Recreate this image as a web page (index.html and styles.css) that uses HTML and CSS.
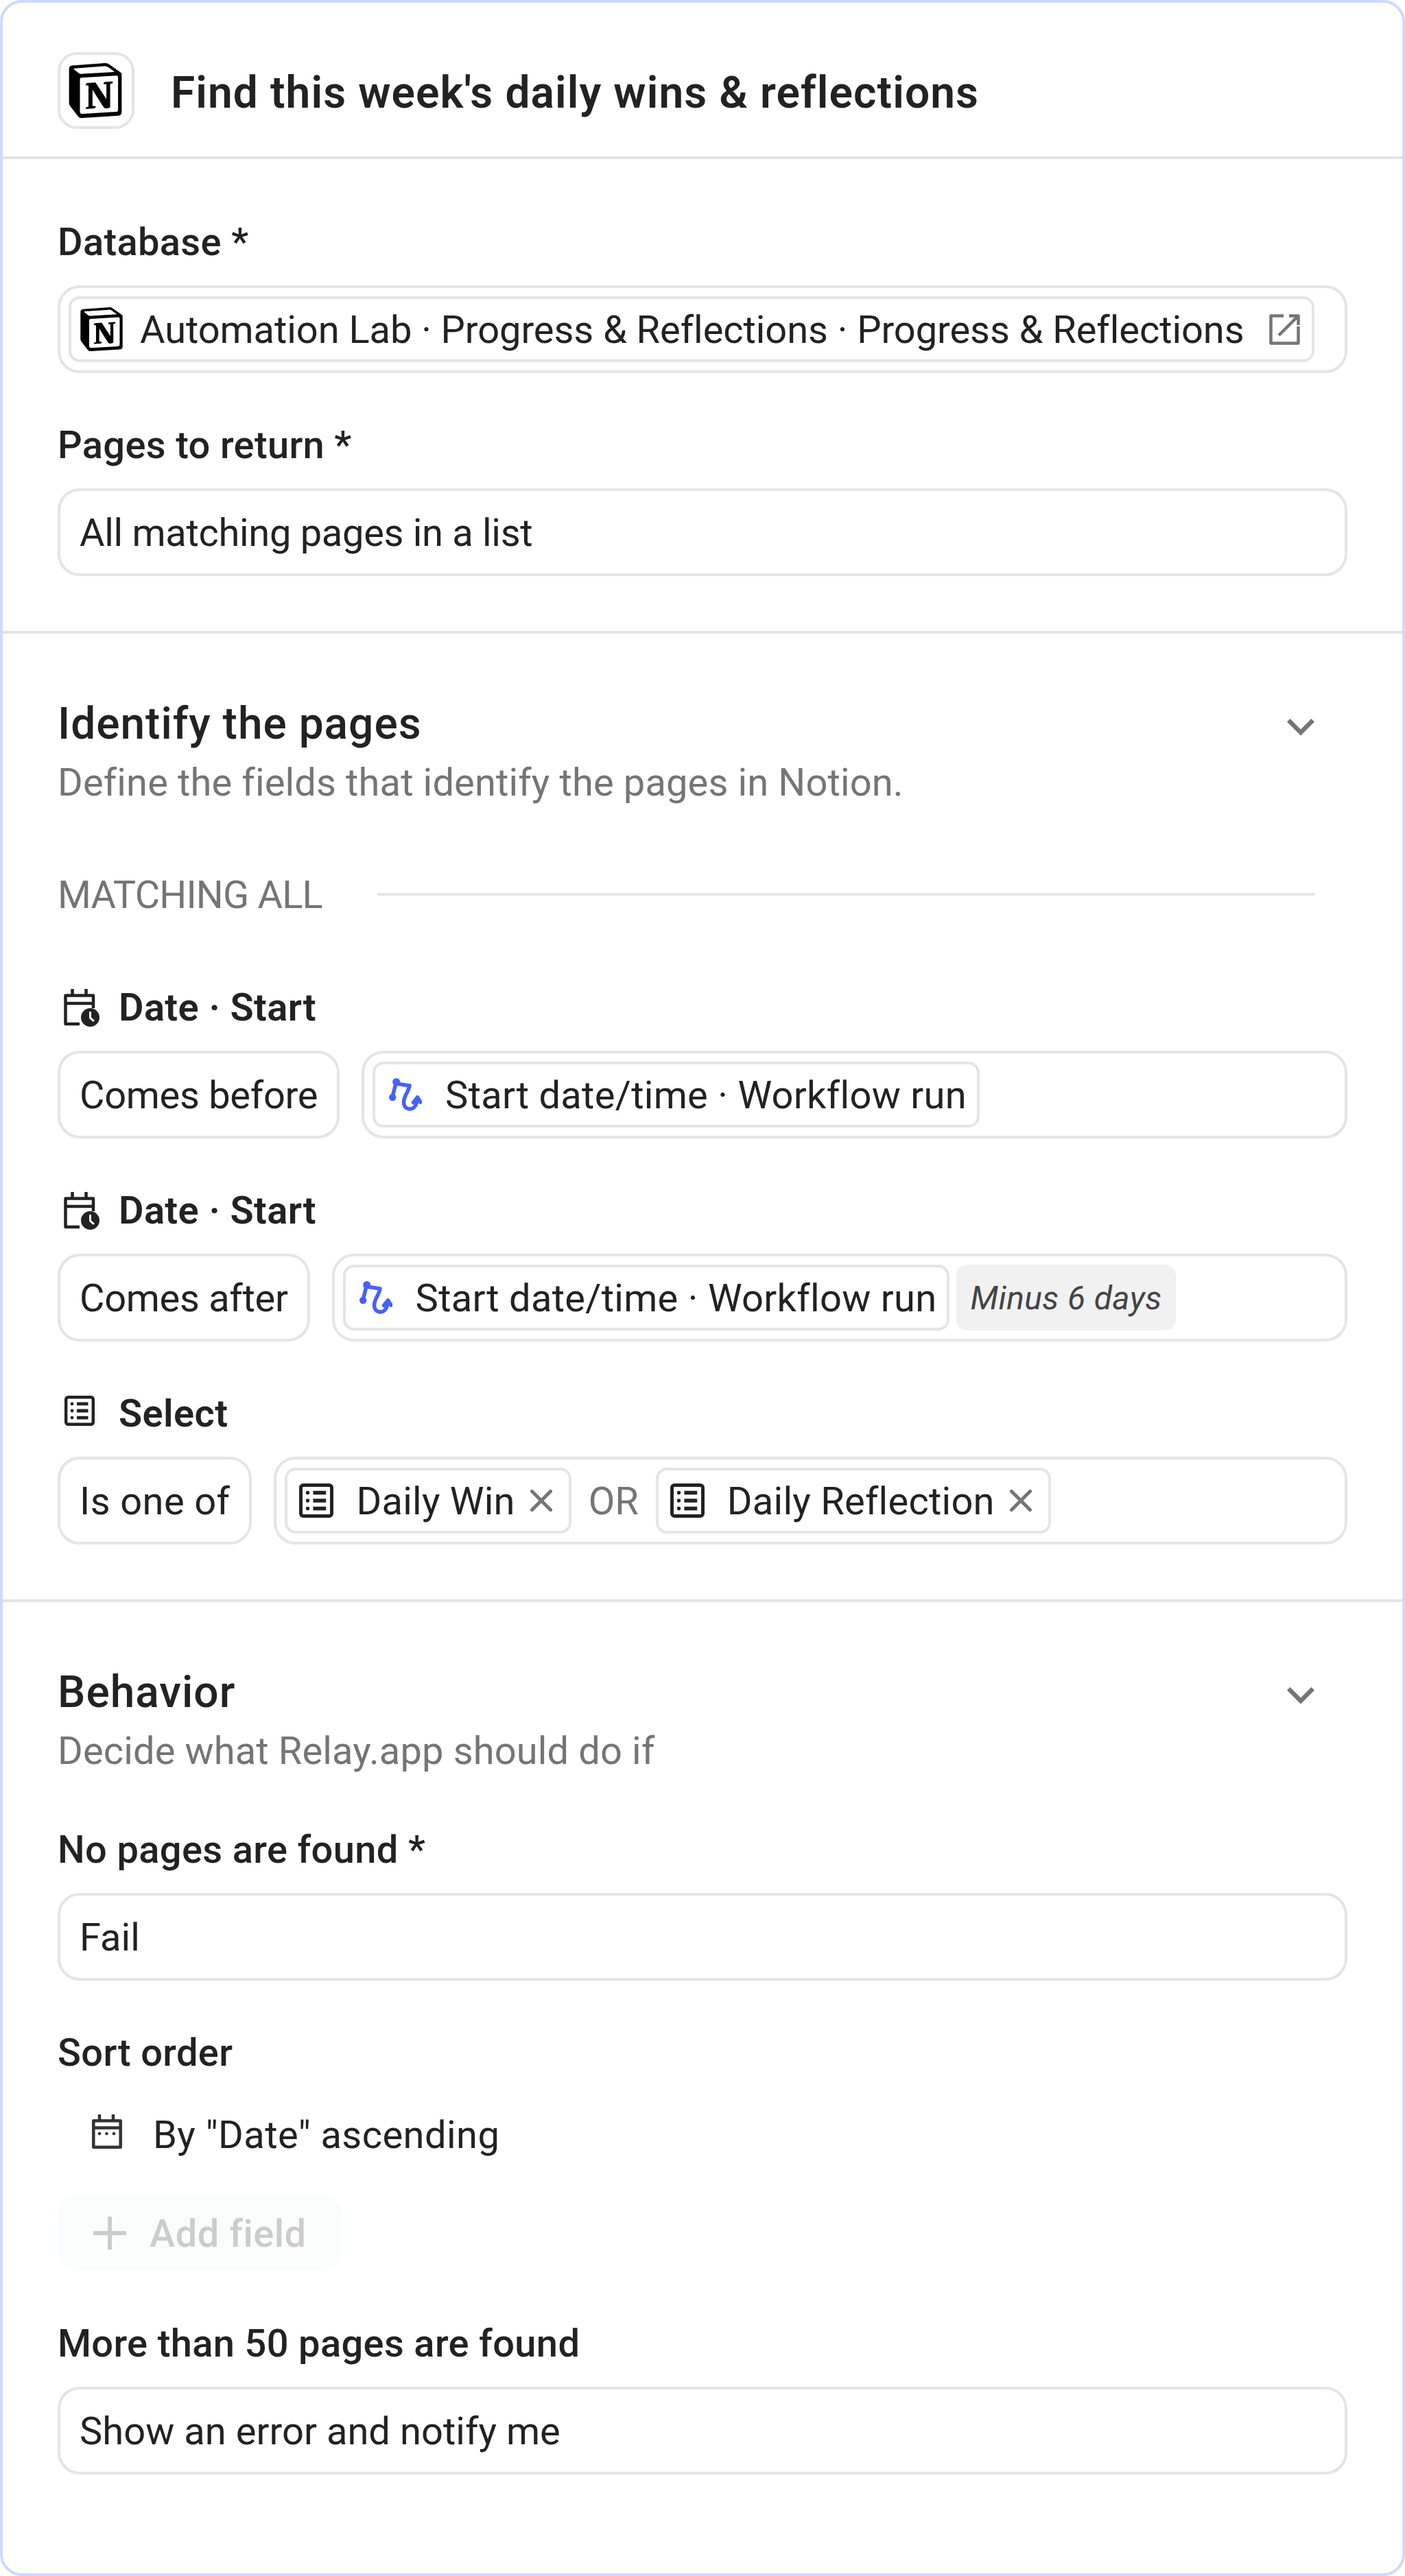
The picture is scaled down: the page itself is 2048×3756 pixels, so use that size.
FILE: index.html
```html
<!doctype html>
<html lang="en">
<head>
<meta charset="utf-8">
<title>Find this week's daily wins &amp; reflections</title>
<link rel="stylesheet" href="styles.css">
</head>
<body>
<svg class="defs" width="0" height="0" aria-hidden="true">
  <defs>
    <symbol id="notion" viewBox="0 0 24 24">
      <path fill="#fff" d="M2 2l14-1.2 6.6 4.6v17l-16.6 1-4-5z"/>
      <path fill="#000" d="M4.459 4.208c.746.606 1.026.56 2.428.466l13.215-.793c.28 0 .047-.28-.046-.326L17.86 1.968c-.42-.326-.981-.7-2.055-.607L3.01 2.295c-.466.046-.56.28-.374.466zm.793 3.08v13.904c0 .747.373 1.027 1.214.98l14.523-.84c.841-.046.935-.56.935-1.167V6.354c0-.606-.233-.933-.748-.887l-15.177.887c-.56.047-.747.327-.747.933zm14.337.745c.093.42 0 .84-.42.888l-.7.14v10.264c-.608.327-1.168.514-1.635.514-.748 0-.935-.234-1.495-.933l-4.577-7.186v6.952L12.21 19s0 .84-1.168.84l-3.222.186c-.093-.186 0-.653.327-.746l.84-.233V9.854L7.822 9.76c-.094-.42.14-1.026.793-1.073l3.456-.233 4.764 7.279v-6.44l-1.215-.14c-.093-.514.28-.887.747-.933zM1.936 1.035l13.31-.98c1.634-.14 2.055-.047 3.082.7l4.249 2.986c.7.513.934.653.934 1.213v16.378c0 1.026-.373 1.634-1.68 1.726l-15.458.934c-.98.047-1.448-.093-1.962-.747l-3.129-4.06c-.56-.747-.793-1.306-.793-1.96V2.667c0-.839.374-1.54 1.447-1.632z"/>
    </symbol>
    <symbol id="list" viewBox="0 0 24 24">
      <rect x="1.2" y="1.2" width="21.6" height="21.6" rx="1.8" fill="none" stroke="#222" stroke-width="2.4"/>
      <path fill="#222" d="M9.8 5.2h9v2.6h-9zM9.8 10.7h9v2.6h-9zM9.800 16.2h9v2.6h-9z"/>
      <circle cx="6" cy="6.5" r="1.3" fill="#222"/><circle cx="6" cy="12" r="1.3" fill="#222"/><circle cx="6" cy="17.500" r="1.3" fill="#222"/>
    </symbol>
    <symbol id="datetime" viewBox="0 0 52 55">
      <path fill="none" stroke="#222" stroke-width="4.5" stroke-linejoin="round" d="M23 51H2.500V9.500H43V28M2.500 21H43M12.500 0V9M32.500 0V9"/>
      <circle cx="38.500" cy="41.500" r="13.500" fill="#222"/>
      <path fill="none" stroke="#fff" stroke-width="3" d="M38.500 33V42L44 47"/>
    </symbol>
    <symbol id="flow" viewBox="0 0 48 48">
      <g fill="none" stroke="#4562ff" stroke-width="5.500" stroke-linecap="round" stroke-linejoin="round">
        <path d="M10.700 5L5 27.700M10.700 8L30 11C28.500 20 21.500 26 21.500 35C21.500 42 26 45 30.500 45C37 45 41 38 41.300 30"/>
        <path d="M35.500 35.500L41.500 28L46 35"/>
      </g>
      <circle cx="10.700" cy="5.500" r="5.500" fill="#4562ff"/><circle cx="5.200" cy="28" r="5.200" fill="#4562ff"/>
    </symbol>
    <symbol id="close" viewBox="0 0 32 32">
      <path fill="none" stroke="#757575" stroke-width="5" stroke-linecap="square" d="M2.500 2.500L29.500 29.500M29.500 2.500L2.500 29.500"/>
    </symbol>
    <symbol id="chevron" viewBox="0 0 40 24">
      <path fill="none" stroke="#757575" stroke-width="6.500" d="M2.300 2.300L20 20L37.700 2.300"/>
    </symbol>
  </defs>
</svg>

<main class="card">
  <header class="head">
    <span class="logo-box"><svg class="logo-lg"><use href="#notion"/></svg></span>
    <h1 class="head-title">Find this week's daily wins &amp; reflections</h1>
  </header>

  <section class="section">
    <div class="field">
      <div class="label">Database *</div>
      <div class="box box-db">
        <span class="chip chip-db">
          <svg class="logo-sm"><use href="#notion"/></svg>
          <span class="db-text">Automation Lab · Progress &amp; Reflections · Progress &amp; Reflections</span>
          <svg class="ext" viewBox="0 0 45 45"><path fill="none" stroke="#757575" stroke-width="4.500" stroke-linejoin="round" d="M21 2.500H2.500V42.500H42.500V18M29 2.500H42.500V16M14 31L42 3"/></svg>
        </span>
      </div>
    </div>
    <div class="field">
      <div class="label">Pages to return *</div>
      <div class="box box-text text-tight">All matching pages in a list</div>
    </div>
  </section>

  <section class="section">
    <div class="sec-head">
      <h2 class="sec-title">Identify the pages</h2>
      <svg class="chev"><use href="#chevron"/></svg>
    </div>
    <p class="sec-sub">Define the fields that identify the pages in Notion.</p>
    <div class="match"><span class="match-text">MATCHING ALL</span><span class="match-line"></span></div>

    <div class="conds">
      <div class="cond">
        <div class="label label-strong"><svg class="ic-date"><use href="#datetime"/></svg>Date · Start</div>
        <div class="row">
          <div class="box box-text text-tight">Comes before</div>
          <div class="box box-grow">
            <span class="chip chip-flow"><svg class="ic-flow"><use href="#flow"/></svg>Start date/time · Workflow run</span>
          </div>
        </div>
      </div>
      <div class="cond">
        <div class="label label-strong"><svg class="ic-date"><use href="#datetime"/></svg>Date · Start</div>
        <div class="row">
          <div class="box box-text text-tight">Comes after</div>
          <div class="box box-grow">
            <span class="chip chip-flow"><svg class="ic-flow"><use href="#flow"/></svg>Start date/time · Workflow run</span>
            <span class="modifier">Minus 6 days</span>
          </div>
        </div>
      </div>
      <div class="cond">
        <div class="label label-strong"><svg class="ic-list-sm"><use href="#list"/></svg>Select</div>
        <div class="row">
          <div class="box box-text text-loose">Is one of</div>
          <div class="box box-grow">
            <span class="chip chip-opt"><svg class="ic-list"><use href="#list"/></svg>Daily Win<svg class="ic-x"><use href="#close"/></svg></span>
            <span class="or">OR</span>
            <span class="chip chip-opt"><svg class="ic-list"><use href="#list"/></svg>Daily Reflection<svg class="ic-x"><use href="#close"/></svg></span>
          </div>
        </div>
      </div>
    </div>
  </section>

  <section class="section section-last">
    <div class="sec-head">
      <h2 class="sec-title">Behavior</h2>
      <svg class="chev"><use href="#chevron"/></svg>
    </div>
    <p class="sec-sub">Decide what Relay.app should do if</p>
    <div class="field field-after-sub">
      <div class="label">No pages are found *</div>
      <div class="box box-text">Fail</div>
    </div>
    <div class="field">
      <div class="label">Sort order</div>
      <div class="sort-row">
        <svg class="ic-cal" viewBox="0 0 44 50">
          <g fill="none" stroke="#333" stroke-width="4.500" stroke-linejoin="round"><path d="M2.300 9.300H41.700V47.700H2.300zM2.300 19.500H41.700M11 0V9M31 0V9"/></g>
          <circle cx="11" cy="28" r="2.300" fill="#333"/><circle cx="21.500" cy="28" r="2.300" fill="#333"/><circle cx="32" cy="28" r="2.300" fill="#333"/>
        </svg>
        <span class="sort-text">By "Date" ascending</span>
      </div>
      <div class="add-btn">
        <svg class="ic-plus" viewBox="0 0 48 48"><path fill="none" stroke="#ccc" stroke-width="6" d="M24 0V48M0 24H48"/></svg>
        <span class="add-text">Add field</span>
      </div>
    </div>
    <div class="field">
      <div class="label">More than 50 pages are found</div>
      <div class="box box-text">Show an error and notify me</div>
    </div>
  </section>
</main>
</body>
</html>
```
FILE: styles.css
```css
* { box-sizing: border-box; }
html, body { margin: 0; padding: 0; background: #fff; }
body {
  font-family: Roboto, "Liberation Sans", sans-serif;
  font-size: 56px;
  line-height: 80px;
  color: #222;
}
.defs { position: absolute; }
svg { display: block; flex: none; }

.card {
  width: 2048px;
  height: 3756px;
  border: 4px solid #d0d9ff;
  border-radius: 32px;
  background: #fff;
  overflow: hidden;
}

.head {
  display: flex;
  align-items: center;
  gap: 53px;
  padding: 72px 80px 40px;
  border-bottom: 4px solid #e5e5e5;
}
.logo-box {
  width: 112px;
  height: 112px;
  display: flex;
  align-items: center;
  justify-content: center;
  border: 4px solid #e5e5e5;
  border-radius: 28px;
}
.logo-lg { width: 80px; height: 80px; margin-left: -3px; }
.head-title {
  margin: 7px 0 0;
  font-size: 64px;
  line-height: 96px;
  font-weight: 600;
  letter-spacing: 1.1px;
}

.section {
  padding: 80px 80px;
  border-bottom: 4px solid #e5e5e5;
}
.section-last { padding-bottom: 144px; border-bottom: 0; }

.field + .field { margin-top: 64px; }
.field-after-sub { margin-top: 64px; }

.label {
  display: flex;
  align-items: center;
  height: 80px;
  margin-bottom: 24px;
  padding-top: 2px;
  font-weight: 500;
  letter-spacing: 0.35px;
}
.label-strong { font-weight: 600; letter-spacing: 0.4px; }

.box {
  height: 128px;
  border: 4px solid #e5e5e5;
  border-radius: 32px;
  display: flex;
  align-items: center;
}
.box-text { padding: 2px 28px 0; white-space: nowrap; letter-spacing: 0.05px; }
.text-tight { letter-spacing: -0.3px; }
.text-loose { letter-spacing: 0.4px; }
.box-db { padding: 0 44px 0 12px; }
.box-grow { flex: 1; padding: 0 12px; }

.row { display: flex; gap: 32px; }

.chip {
  height: 96px;
  padding-top: 2px;
  border: 4px solid #e5e5e5;
  border-radius: 16px;
  display: inline-flex;
  align-items: center;
  white-space: nowrap;
}
.chip svg { margin-top: -2px; }
.chip-db { flex: 1; padding: 2px 17px 0 12px; }
.logo-sm { width: 64px; height: 64px; margin-right: 24px; }
.db-text { letter-spacing: -0.06px; }
.ext { width: 45px; height: 45px; margin-left: auto; }

.chip-flow { padding: 2px 15px 0 20px; letter-spacing: 0.3px; }
.ic-flow { width: 48px; height: 48px; margin-right: 34px; }

.chip-opt { padding: 2px 24px 0 17px; letter-spacing: 0.25px; }
.ic-list { width: 50px; height: 50px; margin-right: 33px; }
.ic-x { width: 32px; height: 32px; margin-left: 22px; }

.modifier {
  height: 96px;
  margin-left: 10px;
  padding: 2px 20px 0;
  border-radius: 16px;
  background: #f1f1f1;
  color: #444;
  font-size: 48px;
  font-style: italic;
  letter-spacing: 0.4px;
  display: inline-flex;
  align-items: center;
  white-space: nowrap;
}
.or { margin: 2px 25px 0; color: #757575; }

.sec-head { display: flex; justify-content: space-between; align-items: flex-start; height: 96px; }
.sec-title {
  margin: 0;
  padding-top: 4px;
  font-size: 64px;
  line-height: 96px;
  font-weight: 500;
  letter-spacing: 1px;
}
.chev { width: 40px; height: 24px; margin: 44px 48px 0 0; }
.sec-sub { margin: 0; height: 80px; padding-top: 1px; color: #757575; letter-spacing: 0.14px; }

.match { display: flex; align-items: center; gap: 80px; margin-top: 84px; height: 80px; }
.match-text { padding-top: 2px; color: #757575; white-space: nowrap; letter-spacing: -0.8px; }
.match-line { flex: 1; height: 4px; margin-right: 48px; background: #e5e5e5; }

.conds { margin-top: 84px; }
.cond + .cond { margin-top: 64px; }
.ic-date { width: 52px; height: 55px; margin: 0 28px 0 9px; }
.ic-list-sm { width: 44px; height: 44px; margin: -8px 35px 0 10px; }

.sort-row { display: flex; align-items: center; height: 112px; padding-left: 50px; }
.ic-cal { width: 44px; height: 50px; margin: -8px 45px 0 0; }
.sort-text { padding-top: 2px; letter-spacing: 0.45px; }

.add-btn {
  display: flex;
  align-items: center;
  width: 416px;
  height: 112px;
  margin-top: 32px;
  padding-left: 52px;
  border-radius: 32px;
  background: #fbfcfc;
  color: #ccc;
  font-weight: 500;
}
.add-text { padding-top: 2px; letter-spacing: 0.5px; }
.ic-plus { width: 48px; height: 48px; margin-right: 34px; }
```
